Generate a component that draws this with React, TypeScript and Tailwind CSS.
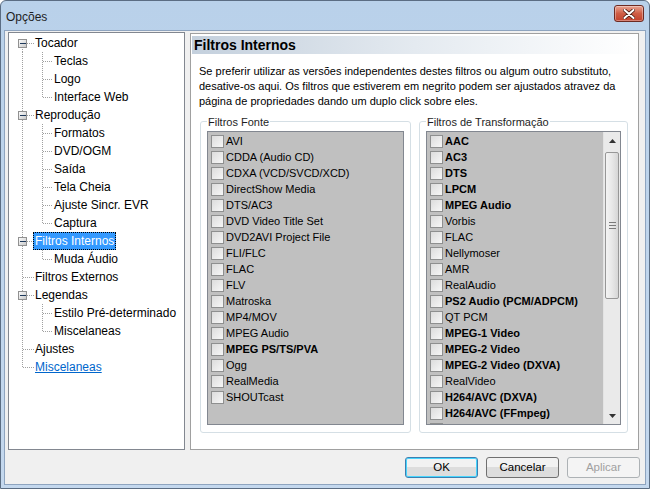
import React from "react";

const FONT = { fontFamily: '"Liberation Sans", Arial, sans-serif' };

type TreeItem = { label: string; level: 0 | 1; expander?: boolean; lastChild?: boolean; selected?: boolean; link?: boolean; lastRoot?: boolean; firstRoot?: boolean };

const tree: TreeItem[] = [
  { label: "Tocador", level: 0, expander: true, firstRoot: true },
  { label: "Teclas", level: 1 },
  { label: "Logo", level: 1 },
  { label: "Interface Web", level: 1, lastChild: true },
  { label: "Reprodução", level: 0, expander: true },
  { label: "Formatos", level: 1 },
  { label: "DVD/OGM", level: 1 },
  { label: "Saída", level: 1 },
  { label: "Tela Cheia", level: 1 },
  { label: "Ajuste Sincr. EVR", level: 1 },
  { label: "Captura", level: 1, lastChild: true },
  { label: "Filtros Internos", level: 0, expander: true, selected: true },
  { label: "Muda Áudio", level: 1, lastChild: true },
  { label: "Filtros Externos", level: 0 },
  { label: "Legendas", level: 0, expander: true },
  { label: "Estilo Pré-determinado", level: 1 },
  { label: "Miscelaneas", level: 1, lastChild: true },
  { label: "Ajustes", level: 0 },
  { label: "Miscelaneas", level: 0, link: true, lastRoot: true },
];

const DOT = "#a0a0a0";

function TreeLines({ item }: { item: TreeItem }) {
  const c = 9;
  const w = item.level === 0 ? 26 : 45;
  return (
    <svg width={w} height={18} className="shrink-0" shapeRendering="crispEdges">
      {item.level === 0 ? (
        <line x1={13.5} y1={item.firstRoot ? c : 0} x2={13.5} y2={item.lastRoot ? c : 18} stroke={DOT} strokeDasharray="1 1" />
      ) : (
        <line x1={13.5} y1={0} x2={13.5} y2={18} stroke={DOT} strokeDasharray="1 1" />
      )}
      {item.level === 0 && (
        <line x1={14} y1={c + 0.5} x2={25} y2={c + 0.5} stroke={DOT} strokeDasharray="1 1" />
      )}
      {item.level === 1 && (
        <>
          <line x1={33.5} y1={0} x2={33.5} y2={item.lastChild ? c : 18} stroke={DOT} strokeDasharray="1 1" />
          <line x1={34} y1={c + 0.5} x2={44} y2={c + 0.5} stroke={DOT} strokeDasharray="1 1" />
        </>
      )}
      {item.expander && (
        <>
          <defs>
            <linearGradient id="expg" x1="0" y1="0" x2="1" y2="1">
              <stop offset="0" stopColor="#ffffff" />
              <stop offset="1" stopColor="#c6c6c6" />
            </linearGradient>
          </defs>
          <rect x={9.5} y={c - 4 + 0.5} width={8} height={8} fill="url(#expg)" stroke="#919191" />
          <line x1={11} y1={c + 0.5} x2={17} y2={c + 0.5} stroke="#1e395b" />
        </>
      )}
    </svg>
  );
}

function Tree() {
  return (
    <div className="w-[177px] h-[418px] shrink-0 border border-[#828790] bg-white pt-[1px] text-[12px] text-black" style={FONT}>
      {tree.map((it, i) => (
        <div key={i} className="flex items-center h-[18px]">
          <TreeLines item={it} />
          {it.selected ? (
            <span className="h-[18px] flex items-center px-[2px] bg-[#3399ff] text-white outline outline-1 outline-dotted outline-[#000] -outline-offset-1 ml-[-2px]">
              {it.label}
            </span>
          ) : (
            <span className={it.link ? "text-[#0066cc] underline" : ""}>{it.label}</span>
          )}
        </div>
      ))}
    </div>
  );
}

function Check() {
  return (
    <span className="w-[13px] h-[13px] shrink-0 border border-[#8e8f8f] bg-gradient-to-br from-[#dcdcdc] to-[#f7f7f7] mr-[2px]" />
  );
}

const sources: [string, boolean][] = [
  ["AVI", false],
  ["CDDA (Audio CD)", false],
  ["CDXA (VCD/SVCD/XCD)", false],
  ["DirectShow Media", false],
  ["DTS/AC3", false],
  ["DVD Video Title Set", false],
  ["DVD2AVI Project File", false],
  ["FLI/FLC", false],
  ["FLAC", false],
  ["FLV", false],
  ["Matroska", false],
  ["MP4/MOV", false],
  ["MPEG Audio", false],
  ["MPEG PS/TS/PVA", true],
  ["Ogg", false],
  ["RealMedia", false],
  ["SHOUTcast", false],
];

const transforms: [string, boolean][] = [
  ["AAC", true],
  ["AC3", true],
  ["DTS", true],
  ["LPCM", true],
  ["MPEG Audio", true],
  ["Vorbis", false],
  ["FLAC", false],
  ["Nellymoser", false],
  ["AMR", false],
  ["RealAudio", false],
  ["PS2 Audio (PCM/ADPCM)", true],
  ["QT PCM", false],
  ["MPEG-1 Video", true],
  ["MPEG-2 Video", true],
  ["MPEG-2 Video (DXVA)", true],
  ["RealVideo", false],
  ["H264/AVC (DXVA)", true],
  ["H264/AVC (FFmpeg)", true],
  ["VC-1 (DXVA)", true],
];

function Items({ items }: { items: [string, boolean][] }) {
  return (
    <div className="flex flex-col pt-[1px] pl-[3px]">
      {items.map(([t, b], i) => (
        <div key={i} className="flex items-center h-[16px] shrink-0">
          <Check />
          <span className={b ? "font-bold whitespace-nowrap" : "whitespace-nowrap"}>{t}</span>
        </div>
      ))}
    </div>
  );
}

function Scrollbar() {
  return (
    <div className="w-[17px] h-full shrink-0 bg-[#eaeaea] flex flex-col border-l border-[#e3e3e3]">
      <div className="h-[17px] flex items-center justify-center">
        <svg width="7" height="4" viewBox="0 0 7 4"><path d="M3.5 0 L7 4 L0 4 Z" fill="#333" /></svg>
      </div>
      <div className="h-[3px]" />
      <div className="h-[147px] mx-[1px] rounded-[2px] border border-[#979797] bg-gradient-to-r from-[#f4f4f4] via-[#e8e8e8] to-[#d6d6d6] flex items-center justify-center">
        <svg width="7" height="7" viewBox="0 0 7 7" shapeRendering="crispEdges">
          <line x1="0" y1="0.5" x2="7" y2="0.5" stroke="#7a7a7a" />
          <line x1="0" y1="3.5" x2="7" y2="3.5" stroke="#7a7a7a" />
          <line x1="0" y1="6.5" x2="7" y2="6.5" stroke="#7a7a7a" />
        </svg>
      </div>
      <div className="flex-1" />
      <div className="h-[17px] flex items-center justify-center">
        <svg width="7" height="4" viewBox="0 0 7 4"><path d="M0 0 L7 0 L3.5 4 Z" fill="#333" /></svg>
      </div>
    </div>
  );
}

function Group({ title, children, w }: { title: string; children: React.ReactNode; w: string }) {
  return (
    <div className={`${w} h-[312px] relative rounded-[3px] border border-[#d5dfe5] pt-[9px] px-[6px]`}>
      <span className="absolute left-[6px] top-[-8px] bg-white px-[1px] text-[#1e1e1e]">{title}</span>
      {children}
    </div>
  );
}

function Button({ label, variant }: { label: string; variant: "default" | "normal" | "disabled" }) {
  const border =
    variant === "default" ? "border-[#3c7fb1] shadow-[inset_0_0_0_1px_#48d5fd]" : variant === "normal" ? "border-[#707070]" : "border-[#adb2b5]";
  const bg = variant === "disabled" ? "bg-[#f4f4f4]" : "bg-gradient-to-b from-[#f2f2f2] from-50% to-[#dddddd] to-50%";
  const text = variant === "disabled" ? "text-[#a0a0a0]" : "text-black";
  return (
    <div className={`w-[73px] h-[21px] rounded-[3px] border ${border} ${bg} ${text} flex items-center justify-center text-[11.5px]`}>
      {label}
    </div>
  );
}

export default function App() {
  return (
    <div className="w-[650px] h-[489px] bg-white" style={FONT}>
      <div className="w-[650px] h-[489px] rounded-t-[6px] border border-[#5b6d83] bg-gradient-to-b from-[#b9d1ea] to-[#c4d8ee] flex flex-col overflow-hidden">
        <div className="h-[29px] shrink-0 flex items-start justify-between pl-[5px] pr-[5px]">
          <span className="text-[12px] text-[#1e1e1e] mt-[7px]">Opções</span>
          <div className="mt-[4px] w-[30px] h-[17px] rounded-[3px] border border-[#6d2a22] bg-gradient-to-b from-[#e8a493] via-[#cf5d45] to-[#c2412c] flex items-center justify-center shadow-[inset_0_0_0_1px_rgba(255,255,255,0.35)]">
            <svg width="12" height="10" viewBox="0 0 12 10">
              <path d="M1.5 1 L10.5 9 M10.5 1 L1.5 9" stroke="#4a1a12" strokeWidth="3.6" strokeLinecap="round" />
              <path d="M1.5 1 L10.5 9 M10.5 1 L1.5 9" stroke="#ffffff" strokeWidth="2" strokeLinecap="round" />
            </svg>
          </div>
        </div>
        <div className="flex-1 mx-[3px] mb-[3px] bg-[#f0f0f0] border border-[#8ea4bf] flex flex-col text-[11px] text-black">
          <div className="flex pl-[3px] pt-[1px] gap-[5px]">
            <Tree />
            <div className="w-[449px] h-[417px] mt-[1px] border border-[#a0a0a0] bg-white px-[1px] pt-[2px]">
              <div className="h-[18px] bg-gradient-to-r from-[#c4d0dd] via-[#e4eaf0] to-[#ffffff] flex items-center pl-[2px]">
                <span className="font-bold text-[14px] text-black">Filtros Internos</span>
              </div>
              <div className="px-[7px] pt-[10px] leading-[15px] text-[11px]">
                Se preferir utilizar as versões independentes destes filtros ou algum outro substituto, desative-os aqui. Os filtros que estiverem em negrito podem ser ajustados atravez da página de propriedades dando um duplo click sobre eles.
              </div>
              <div className="flex gap-[8px] pl-[8px] mt-[12px]">
                <Group title="Filtros Fonte" w="w-[211px]">
                  <div className="h-[294px] border border-[#828790] bg-[#c0c0c0] overflow-hidden">
                    <Items items={sources} />
                  </div>
                </Group>
                <Group title="Filtros de Transformação" w="w-[209px]">
                  <div className="h-[294px] border border-[#828790] bg-[#c0c0c0] overflow-hidden flex">
                    <div className="flex-1 overflow-hidden">
                      <Items items={transforms} />
                    </div>
                    <Scrollbar />
                  </div>
                </Group>
              </div>
            </div>
          </div>
          <div className="flex justify-end gap-[8px] pr-[5px] mt-[7px]">
            <Button label="OK" variant="default" />
            <Button label="Cancelar" variant="normal" />
            <Button label="Aplicar" variant="disabled" />
          </div>
        </div>
      </div>
    </div>
  );
}
